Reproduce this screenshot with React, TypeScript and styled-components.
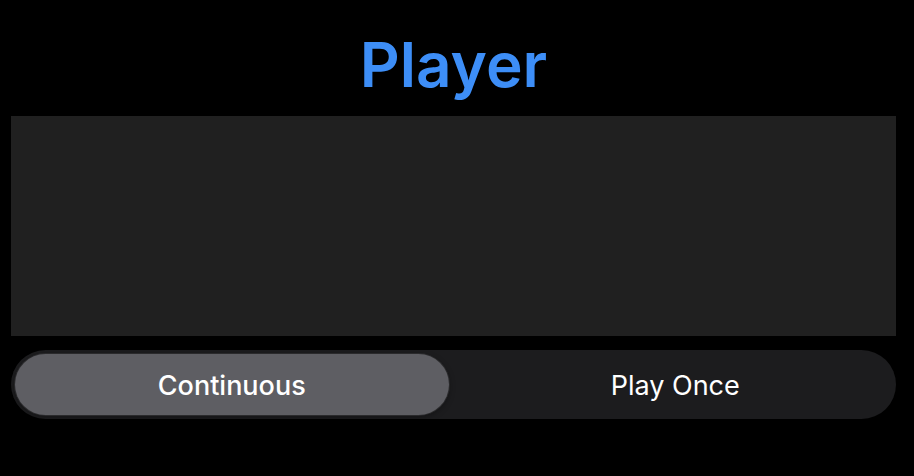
import { useState } from 'react'
import styled, { createGlobalStyle } from 'styled-components'

const GlobalStyle = createGlobalStyle`
  html, body {
    margin: 0;
    padding: 0;
    background: #000;
  }
  body {
    font-family: Inter, "Noto Sans", sans-serif;
    color: #fff;
  }
`

const Screen = styled.div`
  width: 914px;
  height: 476px;
  background: #000;
  display: flex;
  flex-direction: column;
  padding: 0 18px 0 11px;
  box-sizing: border-box;
`

const Title = styled.h1`
  margin: 0;
  height: 116px;
  box-sizing: border-box;
  padding-top: 13px;
  display: flex;
  align-items: center;
  justify-content: center;
  font-size: 62px;
  font-weight: 600;
  color: #3d8ef7;
  letter-spacing: 0;
`

const PlayerArea = styled.div`
  height: 220px;
  background: #202020;
`

const Segmented = styled.div`
  margin-top: 14px;
  height: 69px;
  border-radius: 35px;
  background: #1c1c1e;
  padding: 4px;
  box-sizing: border-box;
  display: flex;
`

const Segment = styled.button<{ $active: boolean }>`
  flex: 1;
  border: none;
  border-radius: 31px;
  font-family: Inter, "Noto Sans", sans-serif;
  font-size: 27px;
  font-weight: ${(p) => (p.$active ? 500 : 400)};
  color: #fff;
  cursor: pointer;
  background: ${(p) => (p.$active ? '#5e5e63' : 'transparent')};
  box-shadow: ${(p) => (p.$active ? '0 0 0 1px #2a2a2c, 0 2px 6px rgba(0,0,0,0.35)' : 'none')};
  margin-right: ${(p) => (p.$active ? '10px' : '0')};
  padding: 2px 0 0;
`

const options = ['Continuous', 'Play Once']

const App = () => {
  const [mode, setMode] = useState('Continuous')

  return (
    <>
      <GlobalStyle />
      <Screen>
        <Title>Player</Title>
        <PlayerArea />
        <Segmented>
          {options.map((o) => (
            <Segment key={o} $active={mode === o} onClick={() => setMode(o)}>
              {o}
            </Segment>
          ))}
        </Segmented>
      </Screen>
    </>
  )
}

export default App
